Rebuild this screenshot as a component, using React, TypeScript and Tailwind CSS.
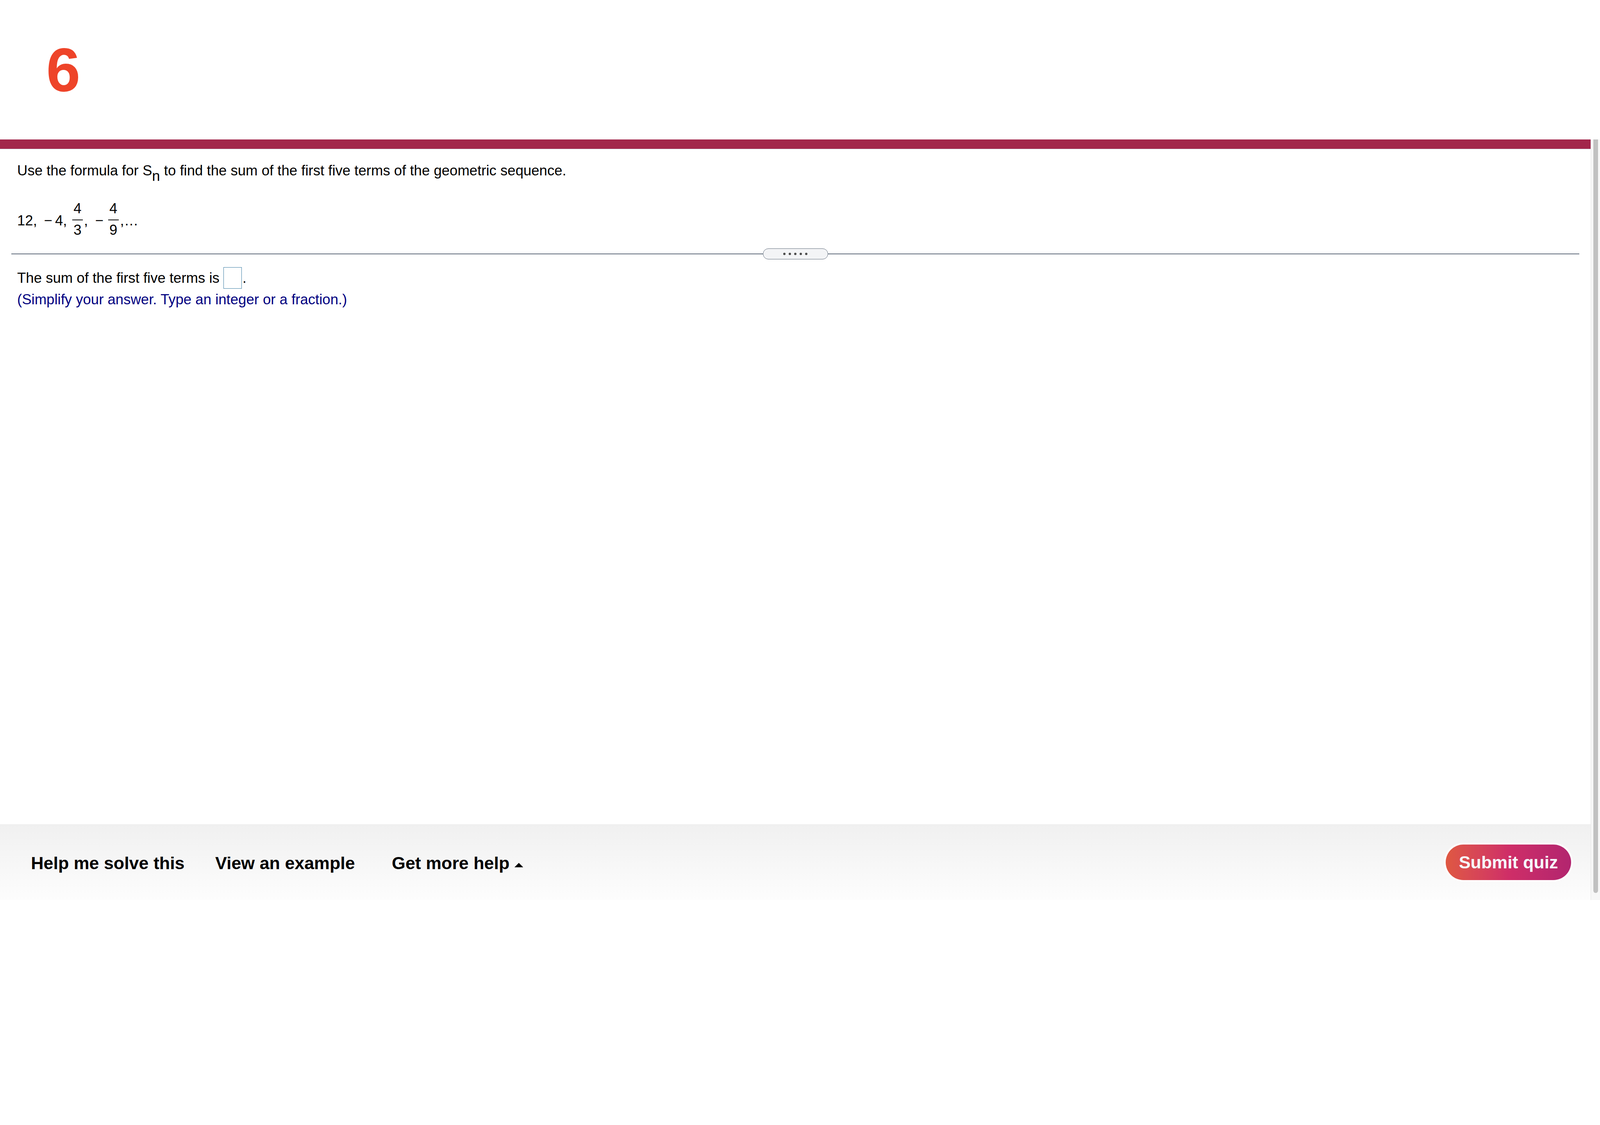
import React from "react"

const font = "font-['Liberation_Sans',Arial,Helvetica,sans-serif]"

function Frac({ num, den, className = "" }: { num: string; den: string; className?: string }) {
  return (
    <span className={`inline-flex flex-col items-stretch mb-[7.2px] ${className}`}>
      <span className="px-[3.2px] text-center leading-[36.8px]">{num}</span>
      <span className="mt-[8.8px] mb-[7.2px] h-[2.4px] bg-black" />
      <span className="px-[3.2px] text-center leading-[36.8px]">{den}</span>
    </span>
  )
}

function Divider() {
  return (
    <div className="mx-[28.8px] mt-[20.8px] flex h-[28px] items-center">
      <div className="h-[1.6px] flex-1 bg-[#5f6b7a]" />
      <div className="flex h-[28px] w-[167px] items-center justify-center gap-[7.6px] rounded-full border-[1.6px] border-[#5f6b7a] bg-[#f3f4f6]">
        <span className="h-[6.4px] w-[6.4px] rounded-full bg-[#4b4b4b]" />
        <span className="h-[6.4px] w-[6.4px] rounded-full bg-[#4b4b4b]" />
        <span className="h-[6.4px] w-[6.4px] rounded-full bg-[#4b4b4b]" />
        <span className="h-[6.4px] w-[6.4px] rounded-full bg-[#4b4b4b]" />
        <span className="h-[6.4px] w-[6.4px] rounded-full bg-[#4b4b4b]" />
      </div>
      <div className="h-[1.6px] flex-1 bg-[#5f6b7a]" />
    </div>
  )
}

export default function App() {
  return (
    <div className={`flex h-[2304px] w-full flex-col overflow-hidden bg-white ${font}`}>
      {/* question number */}
      <header className="h-[356.8px] shrink-0 pl-[118.4px] pt-[100.8px]">
        <span className="text-[156.8px] font-bold leading-none text-[#ee4429]">6</span>
      </header>

      <div className="flex min-h-0 flex-1">
        <div className="flex min-w-0 flex-1 flex-col">
          <div className="h-[24px] shrink-0 bg-[#a2264b]" />
          <div className="h-[1.6px] shrink-0 bg-[#cdd4de]" />

          <main className="flex-1 text-[36.56px] text-black">
            <p className="pl-[44px] pt-[28px]">
              Use the formula for S
              <span className="align-[-13.6px] leading-[0]">n</span> to find the sum of the first five terms of the
              geometric sequence.
            </p>

            <div className="mt-[51px] flex h-[99.2px] items-center pl-[44px]">
              <span className="leading-[36.8px]">12,</span>
              <span className="ml-[17.6px] leading-[36.8px]">−</span>
              <span className="ml-[7.2px] leading-[36.8px]">4,</span>
              <Frac num="4" den="3" className="ml-[13.6px]" />
              <span className="ml-[3.2px] leading-[36.8px]">,</span>
              <span className="ml-[18.4px] leading-[36.8px]">−</span>
              <Frac num="4" den="9" className="ml-[12px]" />
              <span className="ml-[4px] leading-[36.8px]">,…</span>
            </div>

            <Divider />

            <p className="mt-[20px] pl-[44px]">
              The sum of the first five terms is{" "}
              <span className="inline-block h-[54.4px] w-[47.2px] border-[1.6px] border-[#3a7ca3] align-[-14.4px]" />
              <span className="ml-[1.6px]">.</span>
            </p>
            <p className="pl-[44px] text-[#000080]">
              (Simplify your answer. Type an integer or a fraction.)
            </p>
          </main>

          <footer className="flex h-[193.6px] shrink-0 items-center bg-linear-to-b from-[#f0f0f0] to-[#fdfdfd] text-[44.8px] font-bold text-black">
            <div className="mt-[5.6px] flex items-center">
              <button className="ml-[79.2px] font-bold">Help me solve this</button>
              <button className="ml-[78.4px] font-bold">View an example</button>
              <button className="ml-[94.4px] font-bold">
                Get more help
                <svg className="ml-[12.8px] inline-block align-[4.8px]" width="22.4" height="11.2" viewBox="0 0 28 14">
                  <polygon points="0,14 14,0 28,14" fill="#000" />
                </svg>
              </button>
            </div>
            <button className="ml-auto mr-[49.6px] flex h-[91.2px] w-[321.6px] items-center justify-center rounded-full bg-gradient-to-r from-[#df5841] via-[#cf2e67] to-[#b2256f] text-[44.8px] font-bold text-[#f7f8fc] ring-[4.8px] ring-white/70">
              Submit quiz
            </button>
          </footer>
        </div>

        {/* scrollbar */}
        <div className="w-[24px] shrink-0 border-l border-[#e6e6e6] bg-[#f7f7f7]">
          <div className="ml-[5.6px] h-[1928.8px] w-[12.8px] rounded-b-full bg-[#c1c1c1]" />
        </div>
      </div>
    </div>
  )
}
